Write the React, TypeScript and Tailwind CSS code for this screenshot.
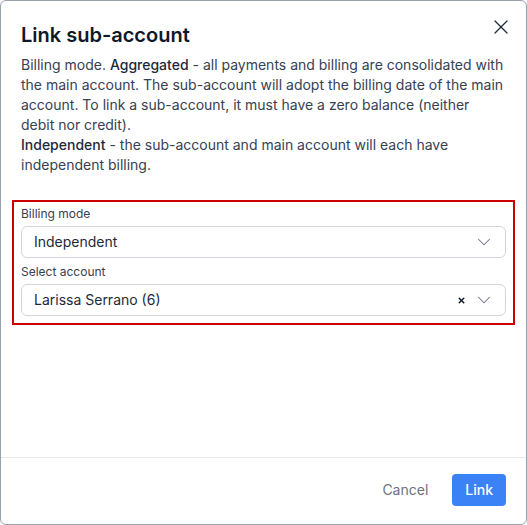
import { X, ChevronDown } from 'lucide-react';

function SelectBox({ value, clearable }: { value: string; clearable?: boolean }) {
  return (
    <div className="mt-1 flex h-8 items-center rounded-md border border-gray-300 bg-white pl-3 pr-[10px]">
      <span className="flex-1 text-sm text-gray-800">{value}</span>
      {clearable && <X size={9} strokeWidth={4} className="mr-[7px] text-gray-900" />}
      <ChevronDown size={22} strokeWidth={1.1} className="text-gray-500" />
    </div>
  );
}

export default function App() {
  return (
    <div
      className="relative flex h-[525px] w-[527px] flex-col rounded-md border border-gray-400 bg-white"
      style={{ fontFamily: 'Inter, "Noto Sans", sans-serif' }}
    >
      <button className="absolute right-[13px] top-[14px] text-gray-800">
        <X size={24} strokeWidth={1.25} />
      </button>

      {/* Body */}
      <div className="flex-1 px-5 pt-5">
        <h2 className="text-xl font-semibold leading-7 text-gray-900">Link sub-account</h2>
        <p className="mt-1.5 text-sm leading-5 text-gray-700">
          Billing mode. <span className="font-medium text-gray-800">Aggregated</span> - all payments and billing
          are consolidated with the main account. The sub-account will adopt the billing date of the main account.
          To link a sub-account, it must have a zero balance (neither debit nor credit).
          <br />
          <span className="font-medium text-gray-800">Independent</span> - the sub-account and main account will
          each have independent billing.
        </p>

        <div className="-mx-[9px] mt-[25px] border-2 border-[#cc0000] px-[7px] pb-[7px] pt-1">
          <label className="block text-xs leading-4 text-gray-700">Billing mode</label>
          <SelectBox value="Independent" />
          <label className="mt-1.5 block text-xs leading-4 text-gray-700">Select account</label>
          <SelectBox value="Larissa Serrano (6)" clearable />
        </div>
      </div>

      {/* Footer */}
      <div className="flex items-center justify-end gap-3 border-t border-gray-200 px-5 pb-[18px] pt-4">
        <button className="h-8 px-3 text-sm text-gray-500">Cancel</button>
        <button className="h-8 rounded bg-[#3b82f6] px-[13px] text-sm font-medium text-white">Link</button>
      </div>
    </div>
  );
}
